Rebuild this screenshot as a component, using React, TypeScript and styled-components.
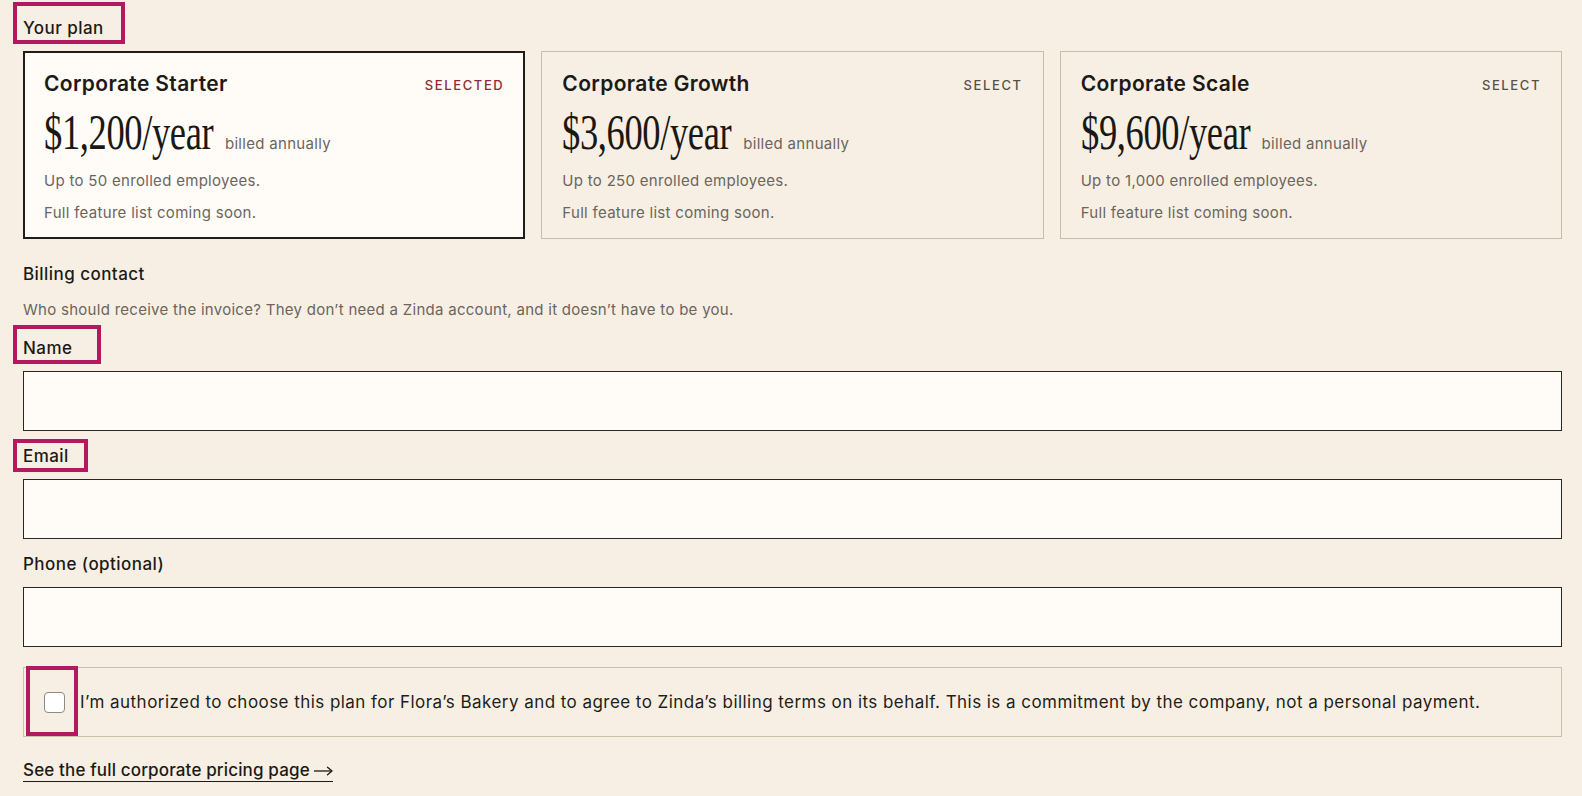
import React from "react";
import styled, { createGlobalStyle } from "styled-components";

const GlobalStyle = createGlobalStyle`
    html, body {
        margin: 0;
        padding: 0;
        background: #f7efe3;
    }
    body {
        font-family: Inter, "Noto Sans", sans-serif;
        color: #1c1a17;
        -webkit-font-smoothing: antialiased;
    }
    * {
        box-sizing: border-box;
    }
`;

type Plan = {
    name: string;
    price: string;
    seats: string;
    selected?: boolean;
};

const plans: Plan[] = [
    { name: "Corporate Starter", price: "$1,200/year", seats: "Up to 50 enrolled employees.", selected: true },
    { name: "Corporate Growth", price: "$3,600/year", seats: "Up to 250 enrolled employees." },
    { name: "Corporate Scale", price: "$9,600/year", seats: "Up to 1,000 enrolled employees." },
];

type Mark = { $top: number; $left: number; $width: number; $height: number };

const PlanCard = ({ plan }: { plan: Plan }) => (
    <Card $selected={!!plan.selected}>
        <CardHead>
            <PlanName>{plan.name}</PlanName>
            <PlanAction $selected={!!plan.selected}>
                {plan.selected ? "Selected" : "Select"}
            </PlanAction>
        </CardHead>
        <PriceRow>
            <Price>{plan.price}</Price>
            <Billed>billed annually</Billed>
        </PriceRow>
        <CardText>{plan.seats}</CardText>
        <CardText>Full feature list coming soon.</CardText>
    </Card>
);

const Field = ({ label, mark }: { label: string; mark?: Mark }) => (
    <FieldWrap>
        <Label>
            {label}
            {mark && <Highlight {...mark} />}
        </Label>
        <Input type="text" />
    </FieldWrap>
);

const ArrowIcon = () => (
    <ArrowSvg width="19" height="10" viewBox="0 0 19 10" fill="none" stroke="currentColor" strokeWidth="1.3">
        <path d="M0 5h18" />
        <path d="M13.5 1.2L18 5l-4.5 3.8" strokeLinecap="round" strokeLinejoin="round" />
    </ArrowSvg>
);

export default function App() {
    return (
        <>
            <GlobalStyle />
            <Page>
                <SectionLabel>
                    Your plan
                    <Highlight $top={-14} $left={-10} $width={112} $height={42} />
                </SectionLabel>
                <PlanGrid>
                    {plans.map(p => <PlanCard key={p.name} plan={p} />)}
                </PlanGrid>

                <BillingTitle>Billing contact</BillingTitle>
                <Hint>
                    Who should receive the invoice? They don’t need a Zinda account, and it doesn’t have to be you.
                </Hint>

                <Field label="Name" mark={{ $top: -11, $left: -10, $width: 88, $height: 39 }} />
                <Field label="Email" mark={{ $top: -5, $left: -10, $width: 75, $height: 33 }} />
                <Field label="Phone (optional)" />

                <Consent>
                    <BoxWrap>
                        <Checkbox type="checkbox" />
                        <Highlight $top={-26} $left={-18} $width={52} $height={70} />
                    </BoxWrap>
                    <ConsentText>
                        I’m authorized to choose this plan for Flora’s Bakery and to agree to Zinda’s billing terms on its behalf. This is a commitment by the company, not a personal payment.
                    </ConsentText>
                </Consent>

                <PricingLink href="#">
                    See the full corporate pricing page <ArrowIcon />
                </PricingLink>
            </Page>
        </>
    );
}

const Page = styled.main`
    display: flex;
    flex-direction: column;
    align-items: flex-start;
    padding: 16px 20px 12px 23px;
    min-height: 796px;
`;

const Highlight = styled.span<Mark>`
    position: absolute;
    top: ${p => p.$top}px;
    left: ${p => p.$left}px;
    width: ${p => p.$width}px;
    height: ${p => p.$height}px;
    border: 4px solid #b3195f;
    pointer-events: none;
`;

const SectionLabel = styled.div`
    position: relative;
    font-size: 17px;
    line-height: 25px;
    font-weight: 500;
    letter-spacing: 0.45px;
`;

const PlanGrid = styled.div`
    display: grid;
    grid-template-columns: repeat(3, 1fr);
    gap: 16px;
    width: 100%;
    margin-top: 10px;
`;

const Card = styled.div<{ $selected: boolean }>`
    display: flex;
    flex-direction: column;
    height: 188px;
    background: ${p => p.$selected ? "#fffcf8" : "transparent"};
    border: ${p => p.$selected ? "2px solid #1f1d1a" : "1px solid #c9bca9"};
    padding: ${p => p.$selected ? "16px 19px 0 19px" : "17px 20px 0 20px"};
`;

const CardHead = styled.div`
    display: flex;
    justify-content: space-between;
    align-items: center;
    height: 28px;
`;

const PlanName = styled.span`
    font-size: 21px;
    font-weight: 600;
    letter-spacing: 0.35px;
`;

const PlanAction = styled.span<{ $selected: boolean }>`
    font-size: 13px;
    font-weight: 500;
    letter-spacing: 1.6px;
    text-transform: uppercase;
    color: ${p => p.$selected ? "#8c2b2f" : "#56514a"};
    margin-top: 4px;
`;

const PriceRow = styled.div`
    display: flex;
    align-items: baseline;
    margin: 11px 0 13px;
`;

const Price = styled.span`
    display: inline-block;
    font-family: "Liberation Serif", "Times New Roman", serif;
    font-size: 50px;
    line-height: 49px;
    letter-spacing: -0.5px;
    transform: scaleX(0.73);
    transform-origin: left center;
    margin-right: calc(-1.28em + 13px);
    color: #1a1815;
`;

const Billed = styled.span`
    font-size: 15px;
    letter-spacing: 0.3px;
    color: #6b655d;
`;

const CardText = styled.p`
    margin: 0 0 10px;
    font-size: 15px;
    line-height: 22px;
    letter-spacing: 0.3px;
    color: #6b655d;
`;

const BillingTitle = styled.h3`
    margin: 23px 0 0;
    font-size: 17px;
    line-height: 25px;
    font-weight: 500;
    letter-spacing: 0.45px;
`;

const Hint = styled.p`
    margin: 12px 0 2px;
    font-size: 15px;
    line-height: 22px;
    letter-spacing: 0.28px;
    color: #6b655d;
`;

const FieldWrap = styled.div`
    display: flex;
    flex-direction: column;
    gap: 10px;
    width: 100%;
    margin-top: 13px;
`;

const Label = styled.label`
    position: relative;
    align-self: flex-start;
    font-size: 17px;
    line-height: 25px;
    font-weight: 500;
    letter-spacing: 0.45px;
`;

const Input = styled.input`
    width: 100%;
    height: 60px;
    background: #fffcf8;
    border: 1px solid #2a2723;
    border-radius: 0;
    padding: 0 16px;
    font: inherit;
    font-size: 17px;
    outline: none;
`;

const Consent = styled.div`
    display: flex;
    align-items: center;
    gap: 15px;
    width: 100%;
    height: 70px;
    margin-top: 20px;
    padding: 0 20px;
    border: 1px solid #cbbfad;
`;

const BoxWrap = styled.span`
    position: relative;
    display: flex;
    flex-shrink: 0;
`;

const Checkbox = styled.input`
    appearance: none;
    margin: 0;
    width: 21px;
    height: 21px;
    background: #ffffff;
    border: 1.5px solid #8e8a85;
    border-radius: 4px;
`;

const ConsentText = styled.span`
    font-size: 17px;
    line-height: 25px;
    letter-spacing: 0.45px;
    color: #1f1d1a;
`;

const PricingLink = styled.a`
    display: inline-flex;
    align-items: center;
    gap: 4px;
    margin-top: 22px;
    font-size: 17px;
    line-height: 22px;
    font-weight: 500;
    letter-spacing: 0.15px;
    color: #1c1a17;
    text-decoration: none;
    border-bottom: 1.5px solid #1c1a17;
`;

const ArrowSvg = styled.svg`
    margin-top: 2px;
`;
